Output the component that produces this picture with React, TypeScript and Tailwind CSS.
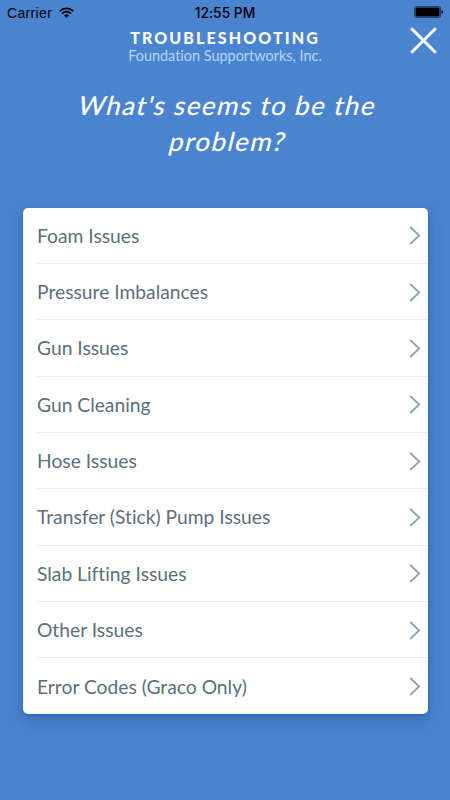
const issues = [
    'Foam Issues',
    'Pressure Imbalances',
    'Gun Issues',
    'Gun Cleaning',
    'Hose Issues',
    'Transfer (Stick) Pump Issues',
    'Slab Lifting Issues',
    'Other Issues',
    'Error Codes (Graco Only)',
]

const StatusBar = () => {
    return <div className="grid h-6 grid-cols-3 items-center px-[7px] font-['Liberation_Sans',sans-serif] text-[14px] leading-[22px] text-black">
        <div className="flex items-center gap-[7px] pt-px">
            <span className="tracking-[0.35px]">Carrier</span>
            <svg width="15" height="11" viewBox="0 0 15 11" fill="none" stroke="currentColor" strokeWidth="1.7">
                <path d="M0.7 4.1a9.8 9.8 0 0 1 13.6 0" />
                <path d="M3 6.5a6.4 6.4 0 0 1 9 0" />
                <path d="M7.5 10.8L5.1 8.5a3.4 3.4 0 0 1 4.8 0z" fill="currentColor" stroke="none" />
            </svg>
        </div>
        <span className="pt-px text-center font-['Inter',sans-serif] text-[13.8px] font-medium whitespace-nowrap">12:55 PM</span>
        <svg className="justify-self-end" width="29" height="12" viewBox="0 0 29 12">
            <rect x="0.5" y="0.5" width="26" height="11" rx="1" fill="none" stroke="#24416a" />
            <rect x="1.5" y="1.5" width="24" height="9" fill="#000" />
            <path d="M27.5 4v4c1-.3 1.5-1 1.5-2s-.5-1.7-1.5-2z" fill="#000" />
        </svg>
    </div>
}

const App = () => {
    return <div className="h-[800px] w-[450px] overflow-hidden bg-[#4a84d1] font-['Lato',sans-serif] [font-variant-ligatures:none]">
        <StatusBar />

        <header className="relative h-[46px] pt-[5px] text-center">
            <h1 className="text-[16px] leading-[18px] font-black tracking-[2.1px] text-white">TROUBLESHOOTING</h1>
            <p className="text-[14.45px] leading-[18px] text-[#b9d6fb]">Foundation Supportworks, Inc.</p>
            <button type="button" aria-label="Close" className="absolute top-[3px] right-[13px] text-white">
                <svg width="27" height="27" viewBox="0 0 27 27" stroke="currentColor" strokeWidth="3">
                    <path d="M1.2 1.2L25.8 25.8M25.8 1.2L1.2 25.8" />
                </svg>
            </button>
        </header>

        <h2 className="mt-[17px] pl-[6px] text-center text-[26px] leading-[36px] font-medium tracking-[1.35px] text-white">
            <span className="inline-block -skew-x-[14deg]">What's seems to be the</span>
            <br />
            <span className="inline-block -skew-x-[14deg]">problem?</span>
        </h2>

        <ul className="mt-[48.5px] mr-[22px] ml-[23px] overflow-hidden rounded-[5px] bg-white shadow-[0_1px_0_0.5px_#1f6fc2,0_5px_14px_1px_rgba(45,75,125,0.45)]">
            {issues.map((issue) => (
                <li key={issue} className="group pl-[14px]">
                    <div className="flex h-[56.35px] items-center justify-between border-b border-[#e6f0f5] pr-[7px] group-last:h-[55.6px] group-last:border-b-0">
                        <span className="pt-[2px] text-[19.25px] text-[#5b6f7c]">{issue}</span>
                        <svg className="mt-[1.5px]" width="12" height="19" viewBox="0 0 12 19" fill="none" stroke="#8ba3b5" strokeWidth="1.8">
                            <path d="M1.2 1L10.2 9.5L1.2 18" />
                        </svg>
                    </div>
                </li>
            ))}
        </ul>
    </div>
}

export default App
